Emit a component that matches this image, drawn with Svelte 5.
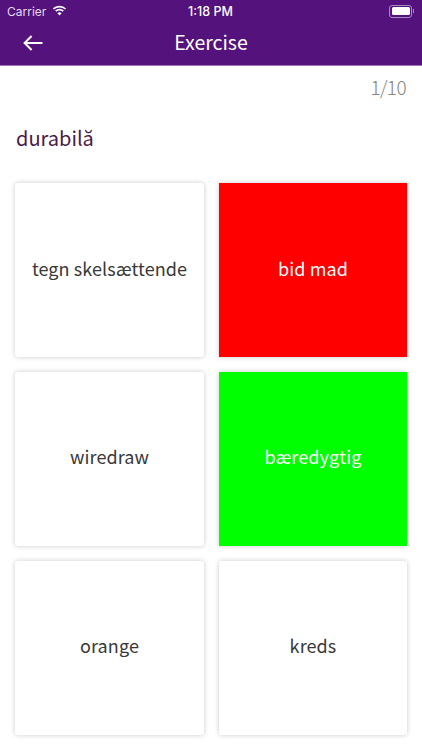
<script lang="ts">
  interface Option {
    label: string;
    state?: 'wrong' | 'right';
  }

  const options: Option[] = [
    { label: 'tegn skelsættende' },
    { label: 'bid mad', state: 'wrong' },
    { label: 'wiredraw' },
    { label: 'bæredygtig', state: 'right' },
    { label: 'orange' },
    { label: 'kreds' }
  ];
</script>

<div class="screen">
  <header class="top">
    <div class="status">
      <div class="status-left">
        <span class="carrier">Carrier</span>
        <svg class="wifi" width="15" height="11" viewBox="0 0 15 11">
          <path d="M7.5 2.4c2.1 0 4 .8 5.5 2.2l1.1-1.2A9.6 9.6 0 0 0 7.5.7C5 .7 2.6 1.7.9 3.4L2 4.6a7.9 7.9 0 0 1 5.5-2.2z" fill="#fff"/>
          <path d="M7.5 5.5c1.2 0 2.3.4 3.2 1.200l1.100-1.200a6.400 6.400 0 0 0-8.600 0l1.100 1.200c.9-.8 2-1.200 3.200-1.200z" fill="#fff"/>
          <path d="M7.500 10.500 9.600 8.200a3.100 3.100 0 0 0-4.200 0z" fill="#fff"/>
        </svg>
      </div>
      <span class="time">1:18 PM</span>
      <div class="status-right">
        <div class="battery"><div class="battery-level"></div></div>
        <div class="battery-cap"></div>
      </div>
    </div>
    <div class="nav">
      <svg class="back" width="20" height="16" viewBox="0 0 20 16">
        <path d="M19.500 8H1.800M8.600 1 1.600 8l7 7" fill="none" stroke="#fff" stroke-width="2"/>
      </svg>
      <span class="title">Exercise</span>
    </div>
  </header>

  <div class="count">1/10</div>
  <div class="question">durabilă</div>

  <div class="grid">
    {#each options as opt}
      <div class="card {opt.state ?? ''}">{opt.label}</div>
    {/each}
  </div>
</div>

<style>
  :global(body) {
    margin: 0;
    background: #fff;
  }
  .screen {
    width: 422px;
    height: 750px;
    overflow: hidden;
    font-family: "Noto Sans CJK KR", "Noto Sans", sans-serif;
  }
  .top {
    height: 65px;
    background: #53127c;
    border-bottom: 1px solid #a274bd;
    color: #fff;
  }
  .status {
    height: 22px;
    padding: 0 8px 0 7px;
    display: grid;
    grid-template-columns: 1fr auto 1fr;
    align-items: center;
    font-family: Inter, "Liberation Sans", sans-serif;
    font-size: 12px;
  }
  .status-left {
    display: flex;
    align-items: center;
    gap: 6px;
  }
  .carrier {
    color: #e6dbed;
    font-size: 12px;
  }
  .wifi {
    margin-top: -1px;
  }
  .time {
    font-weight: 500;
    font-size: 12.5px;
  }
  .status-right {
    display: flex;
    justify-content: flex-end;
    align-items: center;
  }
  .battery {
    width: 18px;
    height: 8px;
    padding: 1.5px;
    border: 1px solid #a98bc0;
    border-radius: 3px;
    display: flex;
  }
  .battery-level {
    flex: 1;
    background: #fff;
    border-radius: 1.5px;
  }
  .battery-cap {
    width: 1px;
    height: 4px;
    margin-left: 1px;
    background: #a98bc0;
  }
  .nav {
    position: relative;
    height: 43px;
    display: flex;
    align-items: center;
    justify-content: center;
  }
  .back {
    position: absolute;
    left: 23px;
    top: 13px;
  }
  .title {
    font-size: 19.5px;
    line-height: 40px;
    padding-bottom: 3px;
  }
  .count {
    padding: 8px 16px 0 0;
    text-align: right;
    font-size: 19px;
    font-weight: 300;
    letter-spacing: -0.6px;
    line-height: 26px;
    color: #858585;
  }
  .question {
    margin: 23px 0 0 16px;
    font-size: 20px;
    line-height: 30px;
    color: #4a1a4c;
  }
  .grid {
    display: grid;
    grid-template-columns: 189px 188px;
    grid-auto-rows: 174.3px;
    column-gap: 15px;
    row-gap: 14.5px;
    margin: 30px 0 0 15px;
  }
  .card {
    display: flex;
    align-items: center;
    justify-content: center;
    padding-bottom: 5px;
    box-sizing: border-box;
    background: #fff;
    border-radius: 3px;
    box-shadow: 0 0 5px rgba(0, 0, 0, 0.22);
    font-size: 18px;
    letter-spacing: 0.1px;
    color: #383838;
  }
  .wrong {
    background: #ff0000;
    color: #fff;
    border-radius: 0;
  }
  .right {
    background: #00ff00;
    color: #fff;
    border-radius: 0;
  }
</style>
